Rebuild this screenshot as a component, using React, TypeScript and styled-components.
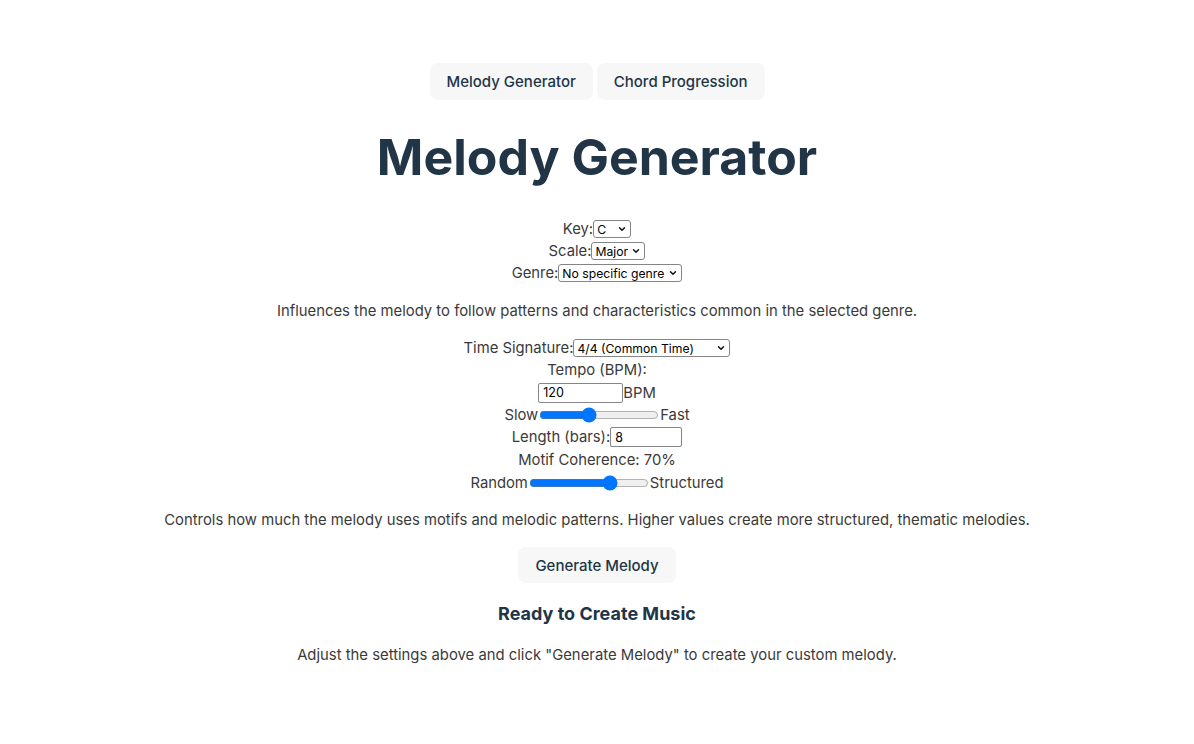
import { useState } from 'react';
import styled, { createGlobalStyle } from 'styled-components';
import { ChevronDown } from 'lucide-react';

const GlobalStyle = createGlobalStyle`
  body {
    margin: 0;
    background: #ffffff;
    font-family: Inter, "Liberation Sans", sans-serif;
    color: #213547;
  }
`;

const Page = styled.div`
  display: flex;
  flex-direction: column;
  align-items: center;
  padding-top: 63px;
`;

const Nav = styled.nav`
  display: flex;
  gap: 4px;
`;

const Button = styled.button`
  height: 37px;
  padding: 0 16px;
  border: 1px solid transparent;
  border-radius: 8px;
  background: #f7f7f7;
  color: #213547;
  font-family: Inter, "Liberation Sans", sans-serif;
  font-size: 15px;
  font-weight: 500;
  cursor: pointer;
`;

const Title = styled.h1`
  margin: 31px 0 0;
  color: #213547;
  font-size: 50px;
  font-weight: 700;
  line-height: 53px;
`;

const Controls = styled.div<{ $top: number }>`
  display: flex;
  flex-direction: column;
  align-items: center;
  margin-top: ${(p) => p.$top}px;
`;

const Row = styled.div<{ $h?: number }>`
  display: flex;
  align-items: center;
  justify-content: center;
  height: ${(p) => p.$h ?? 22}px;
  color: #3a3a3a;
  font-size: 14.8px;
`;

const SelectWrap = styled.span`
  position: relative;
  display: inline-flex;
  align-items: center;

  svg {
    position: absolute;
    right: 4px;
    pointer-events: none;
    color: #111111;
  }
`;

const Select = styled.select<{ $w: number }>`
  appearance: none;
  box-sizing: border-box;
  width: ${(p) => p.$w}px;
  height: 18px;
  padding: 0 16px 0 3px;
  border: 1px solid #858585;
  border-radius: 3px;
  background: #ffffff;
  color: #000000;
  font-family: Inter, "Liberation Sans", sans-serif;
  font-size: 12.2px;
`;

const Input = styled.input<{ $w: number }>`
  box-sizing: border-box;
  width: ${(p) => p.$w}px;
  height: 20px;
  padding: 0 4px;
  border: 1px solid #858585;
  border-radius: 2px;
  color: #000000;
  font-family: Inter, "Liberation Sans", sans-serif;
  font-size: 12.5px;
`;

const Slider = styled.input`
  width: 120px;
  height: 16px;
  margin: 0 1px;
  accent-color: #0075ff;
`;

const Note = styled.p<{ $top: number }>`
  margin: ${(p) => p.$top}px 0 0;
  color: #3a3a3a;
  font-size: 14.85px;
  line-height: 22px;
`;

const GenerateButton = styled(Button)`
  margin-top: 16px;
  height: 36px;
`;

const Status = styled.h3`
  margin: 19px 0 0;
  color: #213547;
  font-size: 18px;
  font-weight: 700;
  line-height: 24px;
`;

function Dropdown({ width, value, options }: { width: number; value: string; options: string[] }) {
  return (
    <SelectWrap>
      <Select $w={width} defaultValue={value}>
        {options.map((o) => (
          <option key={o}>{o}</option>
        ))}
      </Select>
      <ChevronDown size={10} strokeWidth={3.5} />
    </SelectWrap>
  );
}

export default function App() {
  const [tempo, setTempo] = useState(120);
  const [bars, setBars] = useState(8);
  const [coherence, setCoherence] = useState(70);

  return (
    <>
      <GlobalStyle />
      <Page>
        <Nav>
          <Button>Melody Generator</Button>
          <Button>Chord Progression</Button>
        </Nav>

        <Title>Melody Generator</Title>

        <Controls $top={34}>
          <Row>
            Key:
            <Dropdown
              width={38}
              value="C"
              options={['C', 'C#', 'D', 'D#', 'E', 'F', 'F#', 'G', 'G#', 'A', 'A#', 'B']}
            />
          </Row>
          <Row>
            Scale:
            <Dropdown width={54} value="Major" options={['Major', 'Minor']} />
          </Row>
          <Row>
            Genre:
            <Dropdown
              width={124}
              value="No specific genre"
              options={['No specific genre', 'Pop', 'Jazz', 'Classical']}
            />
          </Row>
        </Controls>

        <Note $top={16}>
          Influences the melody to follow patterns and characteristics common in the selected genre.
        </Note>

        <Controls $top={15}>
          <Row>
            Time Signature:
            <Dropdown
              width={157}
              value="4/4 (Common Time)"
              options={['4/4 (Common Time)', '3/4 (Waltz Time)', '6/8 (Compound Time)']}
            />
          </Row>
          <Row>Tempo (BPM):</Row>
          <Row $h={23}>
            <Input
              $w={85}
              type="number"
              value={tempo}
              onChange={(e) => setTempo(Number(e.target.value))}
            />
            BPM
          </Row>
          <Row $h={21}>
            Slow
            <Slider
              type="range"
              min={40}
              max={240}
              value={tempo}
              onChange={(e) => setTempo(Number(e.target.value))}
            />
            Fast
          </Row>
          <Row $h={24}>
            Length (bars):
            <Input
              $w={72}
              type="number"
              value={bars}
              onChange={(e) => setBars(Number(e.target.value))}
            />
          </Row>
          <Row>Motif Coherence: {coherence}%</Row>
          <Row $h={23}>
            Random
            <Slider
              type="range"
              min={0}
              max={100}
              value={coherence}
              onChange={(e) => setCoherence(Number(e.target.value))}
            />
            Structured
          </Row>
        </Controls>

        <Note $top={15}>
          Controls how much the melody uses motifs and melodic patterns. Higher values create more
          structured, thematic melodies.
        </Note>

        <GenerateButton>Generate Melody</GenerateButton>

        <Status>Ready to Create Music</Status>
        <Note $top={18}>
          Adjust the settings above and click "Generate Melody" to create your custom melody.
        </Note>
      </Page>
    </>
  );
}
